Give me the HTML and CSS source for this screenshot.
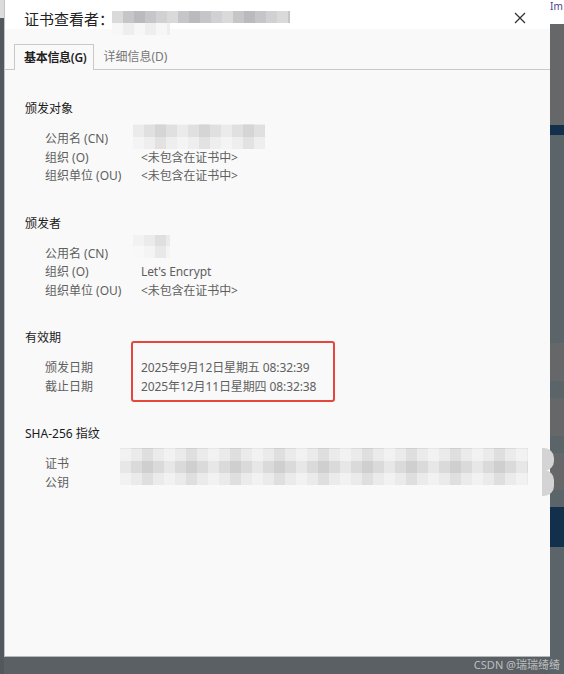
FILE: index.html
```html
<!DOCTYPE html>
<html lang="zh-CN">
<head>
    <meta charset="UTF-8">
    <meta name="viewport" content="width=device-width, initial-scale=1.0">
    <title>证书查看者</title>
    <link rel="stylesheet" href="styles.css">
</head>
<body>
    <div class="screen">
        <div class="side-left"></div>

        <div class="dialog">
            <div class="dialog-header">
                <h1 class="dialog-title">证书查看者：</h1>
                <span class="title-blur"><span class="blur-row dark"></span><span class="blur-row light"></span></span>
                <button class="close-btn" aria-label="关闭">
                    <svg width="12" height="12" viewBox="0 0 12 12"><path d="M1 1L11 11M11 1L1 11" stroke="#333" stroke-width="1.3" fill="none"/></svg>
                </button>
            </div>

            <div class="tabs">
                <div class="tab active">基本信息(G)</div>
                <div class="tab">详细信息(D)</div>
            </div>

            <div class="content">
                <div class="section">
                    <h2>颁发对象</h2>
                    <div class="row">
                        <span class="label">公用名 (CN)</span>
                        <span class="value"><span class="mosaic subject-cn"></span></span>
                    </div>
                    <div class="row">
                        <span class="label">组织 (O)</span>
                        <span class="value">&lt;未包含在证书中&gt;</span>
                    </div>
                    <div class="row">
                        <span class="label">组织单位 (OU)</span>
                        <span class="value">&lt;未包含在证书中&gt;</span>
                    </div>
                </div>

                <div class="section">
                    <h2>颁发者</h2>
                    <div class="row">
                        <span class="label">公用名 (CN)</span>
                        <span class="value"><span class="mosaic issuer-cn"></span></span>
                    </div>
                    <div class="row">
                        <span class="label">组织 (O)</span>
                        <span class="value">Let's Encrypt</span>
                    </div>
                    <div class="row">
                        <span class="label">组织单位 (OU)</span>
                        <span class="value">&lt;未包含在证书中&gt;</span>
                    </div>
                </div>

                <div class="section validity">
                    <h2>有效期</h2>
                    <div class="row">
                        <span class="label">颁发日期</span>
                        <span class="value">2025年9月12日星期五 08:32:39</span>
                    </div>
                    <div class="row">
                        <span class="label">截止日期</span>
                        <span class="value">2025年12月11日星期四 08:32:38</span>
                    </div>
                    <div class="highlight"></div>
                </div>

                <div class="section">
                    <h2>SHA-256 指纹</h2>
                    <div class="row">
                        <span class="label">证书</span>
                        <span class="value"></span>
                    </div>
                    <div class="row">
                        <span class="label">公钥</span>
                        <span class="value"></span>
                    </div>
                    <span class="mosaic fingerprint"></span>
                </div>
            </div>
            <span class="edge-blob top"></span>
            <span class="edge-blob bottom"></span>
        </div>

        <div class="side-right">
            <div class="top-corner">Im</div>
            <div class="band gray" style="height: 101px"></div>
            <div class="band navy" style="height: 10px"></div>
            <div class="band slate" style="height: 208px"></div>
            <div class="band gray" style="height: 38px"></div>
            <div class="band slate" style="height: 17px"></div>
            <div class="band gray" style="height: 38px"></div>
            <div class="band slate" style="height: 17px"></div>
            <div class="band gray" style="height: 37px"></div>
            <div class="band slate" style="height: 17px"></div>
            <div class="band navy" style="height: 40px"></div>
            <div class="band slate" style="height: 127px"></div>
        </div>
    </div>

    <div class="watermark">CSDN @瑞瑞绮绮</div>
</body>
</html>
```

FILE: styles.css
```css
body {
    margin: 0;
    padding: 0;
    width: 564px;
    height: 674px;
    overflow: hidden;
    background-color: #5a6064;
    font-family: "Noto Sans", "Noto Sans CJK SC", sans-serif;
    font-size: 12px;
    position: relative;
}
.screen {
    display: flex;
    height: 674px;
}
.side-left {
    width: 4px;
    flex-shrink: 0;
    background: linear-gradient(#dcdcdc 0 18px, #52585c 18px);
}
.dialog {
    width: 546px;
    height: 657px;
    flex-shrink: 0;
    background-color: #f9f9f9;
    box-sizing: border-box;
    border-left: 1px solid #c4c4c4;
    border-bottom: 1px solid #b8b8b8;
    position: relative;
    display: flex;
    flex-direction: column;
}
.dialog-header {
    height: 29px;
    background-color: #fff;
    display: flex;
    align-items: flex-start;
    padding-left: 19px;
}
.dialog-title {
    margin: 9px 0 0 0;
    font-size: 15px;
    font-weight: normal;
    line-height: 20px;
    color: #222;
}
.title-blur {
    margin: 11px 0 0 -2px;
    width: 178px;
    display: flex;
    flex-direction: column;
}
.blur-row {
    height: 12px;
    display: block;
}
.blur-row.dark {
    background-color: #c6c6c8;
    background-image: repeating-linear-gradient(90deg, rgba(255,255,255,0.35) 0 11px, transparent 11px 22px, rgba(0,0,0,0.06) 22px 33px, transparent 33px 44px, rgba(255,255,255,0.2) 44px 55px);
}
.blur-row.light {
    width: 58px;
    background-color: #eeeeee;
    background-image: repeating-linear-gradient(90deg, rgba(255,255,255,0.5) 0 11px, transparent 11px 22px);
}
.close-btn {
    margin: 11px 23px 0 auto;
    width: 14px;
    height: 14px;
    padding: 1px;
    border: none;
    background: none;
    display: flex;
    align-items: center;
    justify-content: center;
}
.tabs {
    display: flex;
    margin-top: 15px;
    padding-left: 9px;
    border-bottom: 1px solid #c9c9c9;
    height: 25px;
}
.tab {
    padding: 0 9px 0 9px;
    line-height: 26px;
    color: #777;
    white-space: nowrap;
    box-sizing: border-box;
    height: 26px;
}
.tab.active {
    color: #1f1f1f;
    font-weight: 600;
    letter-spacing: -0.3px;
    padding: 0 7px 0 9px;
    border: 1px solid #c9c9c9;
    border-bottom: none;
    background-color: #f9f9f9;
}
.content {
    padding: 30px 0 0 20px;
}
.section {
    position: relative;
    margin-bottom: 29px;
}
.section h2 {
    margin: 0 0 12px 0;
    font-size: 12px;
    font-weight: normal;
    line-height: 18px;
    color: #1b1b1b;
}
.row {
    display: flex;
    line-height: 18.5px;
    color: #5f5f5f;
    padding-left: 20px;
}
.label {
    width: 96px;
    flex-shrink: 0;
}
.value {
    position: relative;
    white-space: nowrap;
    letter-spacing: -0.1px;
}
.mosaic {
    position: absolute;
    display: block;
    background-color: #e0e0e0;
    background-image:
        repeating-linear-gradient(90deg, rgba(255,255,255,0.35) 0 11px, transparent 11px 22px, rgba(0,0,0,0.05) 22px 33px, transparent 33px 44px),
        repeating-linear-gradient(0deg, rgba(255,255,255,0.45) 0 12px, transparent 12px 24px);
}
.subject-cn {
    left: -8px;
    top: -6px;
    width: 132px;
    height: 25px;
}
.issuer-cn {
    left: -8px;
    top: -10px;
    width: 37px;
    height: 23px;
    background-color: #ebebeb;
}
.fingerprint {
    left: 95px;
    top: 23px;
    width: 408px;
    height: 37px;
    background-color: #dadada;
}
.highlight {
    position: absolute;
    left: 106px;
    top: 12px;
    width: 200px;
    height: 57px;
    border: 2px solid #e5463d;
    border-radius: 3px;
}
.edge-blob {
    position: absolute;
    right: -4px;
    width: 12px;
    background-color: #d4d4d4;
    border-radius: 0 10px 10px 0;
}
.edge-blob.top {
    top: 448px;
    height: 23px;
}
.edge-blob.bottom {
    top: 470px;
    height: 26px;
}
.side-right {
    flex: 1;
    display: flex;
    flex-direction: column;
}
.top-corner {
    height: 24px;
    background-color: #fff;
    color: #4b3f8c;
    font-size: 10px;
    line-height: 12px;
    white-space: nowrap;
}
.band {
    flex-shrink: 0;
}
.band.gray {
    background-color: #666768;
}
.band.slate {
    background-color: #5a6469;
}
.band.navy {
    background-color: #122f4c;
}
.watermark {
    position: absolute;
    right: 4px;
    bottom: 2px;
    color: rgba(255,255,255,0.6);
    font-size: 11px;
    line-height: 14px;
}
```
